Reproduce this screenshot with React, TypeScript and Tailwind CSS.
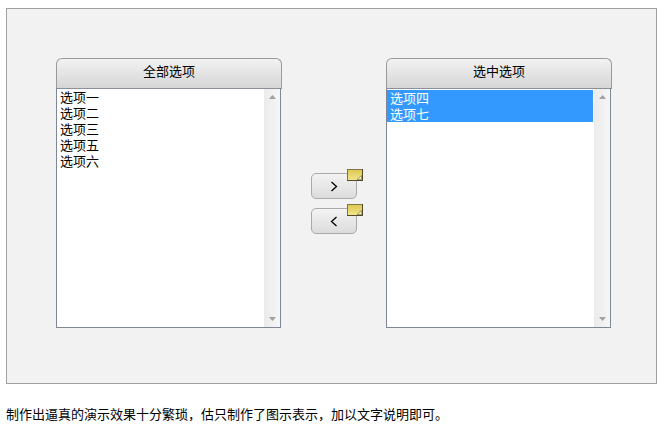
import React from "react";

const font = { fontFamily: '"Liberation Sans", "Noto Sans CJK SC", sans-serif' };

const ListBox = ({
  title,
  items,
  selected,
}: {
  title: string;
  items: string[];
  selected?: boolean;
}) => {
  return (
    <div className="flex h-[270px] w-[226px] flex-col">
      {/* Header */}
      <div className="flex h-[31px] w-[226px] items-center justify-center rounded-t-[6px] border border-[#9a9a9a] border-b-[#8a8f99] bg-gradient-to-b from-[#f2f2f2] to-[#d6d6d6] pb-[3px] text-[13px] text-black">
        {title}
      </div>
      {/* List */}
      <div className="-mt-px flex h-[240px] w-[225px] border border-[#7f8794] border-t-[#8a8f99] bg-white">
        <div className={`flex-1 pt-px text-[13px] leading-4 ${selected ? "mr-px" : "pl-[3px] text-black"}`}>
          {items.map((item) => (
            <div
              key={item}
              className={selected ? "bg-[#3399ff] pl-[3px] text-white" : ""}
            >
              <span className={selected ? "block translate-y-px" : "block"}>{item}</span>
            </div>
          ))}
        </div>
        {/* Scrollbar */}
        <div className="flex w-[16px] flex-col items-center justify-between bg-gradient-to-r from-[#ebebeb] to-[#f6f6f6] py-[6px]">
          <svg width="7" height="4" viewBox="0 0 7 4">
            <path d="M3.5 0 L7 4 L0 4 Z" fill="#a0a0a0" />
          </svg>
          <svg width="7" height="4" viewBox="0 0 7 4">
            <path d="M0 0 L7 0 L3.5 4 Z" fill="#a0a0a0" />
          </svg>
        </div>
      </div>
    </div>
  );
};

const MoveButton = ({ points }: { points: string }) => {
  return (
    <div className="relative flex h-[26px] w-[46px] items-center justify-center rounded-[5px] border border-[#aaaaaa] bg-gradient-to-b from-[#f3f3f3] to-[#dcdcdc]">
      <svg width="8" height="11" viewBox="0 0 8 11">
        <polyline points={points} fill="none" stroke="#000" strokeWidth="1.3" />
      </svg>
      {/* Sticky note */}
      <svg
        className="absolute -top-[5px] -right-[7px]"
        width="16"
        height="12"
        viewBox="0 0 16 12"
      >
        <defs>
          <linearGradient id="note" x1="0" y1="0" x2="0" y2="1">
            <stop offset="0" stopColor="#dcc850" />
            <stop offset="1" stopColor="#f3e58c" />
          </linearGradient>
        </defs>
        <rect x="0.5" y="0.5" width="15" height="11" fill="url(#note)" stroke="#7d7748" />
        <path d="M0 11.5 H16 M15.5 0 V12" stroke="#4f4b2c" strokeWidth="1" />
        <path d="M10 10.5 L14.5 6.5 L14.5 10.5 Z" fill="#fff8cf" stroke="#8a8450" strokeWidth="0.8" />
      </svg>
    </div>
  );
};

export default function App() {
  return (
    <div className="h-[443px] w-[665px] overflow-hidden bg-white" style={font}>
      {/* Main panel */}
      <div className="ml-[6px] mt-[8px] flex h-[376px] w-[651px] items-start gap-[29px] border border-[#a0a0a0] bg-[#f2f2f2] pl-[49px] pt-[49px]">
        <ListBox
          title="全部选项"
          items={["选项一", "选项二", "选项三", "选项五", "选项六"]}
        />
        <div className="flex flex-col gap-[9px] pt-[115px]">
          <MoveButton points="1.5,1 6.5,5.5 1.5,10" />
          <MoveButton points="6.5,1 1.5,5.5 6.5,10" />
        </div>
        <ListBox title="选中选项" items={["选项四", "选项七"]} selected />
      </div>
      <p className="ml-[6px] mt-[23px] text-[13px] leading-4 text-black">
        制作出逼真的演示效果十分繁琐，估只制作了图示表示，加以文字说明即可。
      </p>
    </div>
  );
}
